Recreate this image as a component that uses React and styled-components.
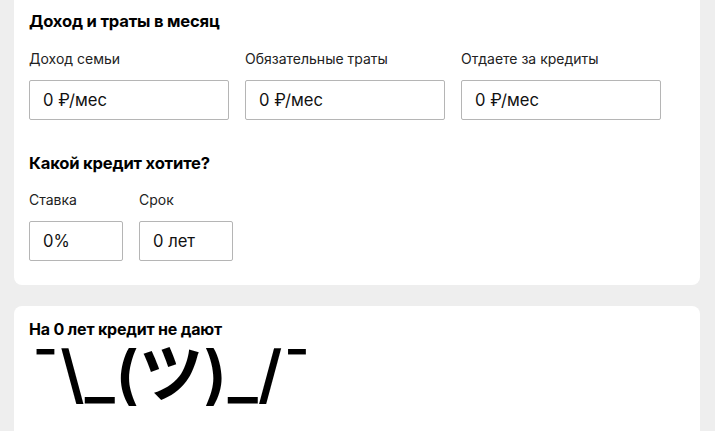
import React from 'react'
import styled, { createGlobalStyle } from 'styled-components'

const GlobalStyle = createGlobalStyle`
  body {
    margin: 0;
    background: #eeeeee;
    font-family: Inter, 'Noto Sans', sans-serif;
    color: #000;
  }
`

const Page = styled.div`
  padding: 0 15px 0 14px;
  margin-top: -8px;
  display: flex;
  flex-direction: column;
  gap: 21px;
`

const Card = styled.section`
  background: #fff;
  border-radius: 8px;
  padding: ${p => p.padding};
`

const Title = styled.h2`
  margin: 0;
  margin-top: ${p => p.top || '0'};
  font-size: ${p => p.size || '16.6px'};
  line-height: 22px;
  font-weight: 700;
  letter-spacing: -0.2px;
`

const Row = styled.div`
  display: flex;
  gap: 16px;
  margin-top: ${p => p.top};
`

const Field = styled.label`
  display: flex;
  flex-direction: column;
  gap: 12px;
`

const Label = styled.span`
  font-size: 14px;
  line-height: 18px;
  color: #222;
`

const Input = styled.input`
  box-sizing: border-box;
  width: ${p => p.width}px;
  height: 40px;
  border: 1px solid #b5b5b5;
  border-radius: 2px;
  padding: 0 13px;
  font-family: inherit;
  font-size: 16.6px;
  color: #111;
  background: #fff;
  outline: none;
`

const Shrug = styled.div`
  font-family: Inter, 'Noto Sans CJK JP', sans-serif;
  font-weight: 600;
  font-size: 64px;
  line-height: 58px;
  margin-top: 5px;
  padding-left: 2px;
  letter-spacing: 0.3px;
`

export default function App() {
  return (
    <>
      <GlobalStyle />
      <Page>
        <Card padding='18px 15px 24px'>
          <Title>Доход и траты в месяц</Title>
          <Row top='18px'>
            <Field>
              <Label>Доход семьи</Label>
              <Input width={200} defaultValue='0 ₽/мес' />
            </Field>
            <Field>
              <Label>Обязательные траты</Label>
              <Input width={200} defaultValue='0 ₽/мес' />
            </Field>
            <Field>
              <Label>Отдаете за кредиты</Label>
              <Input width={200} defaultValue='0 ₽/мес' />
            </Field>
          </Row>
          <Title top='32px'>Какой кредит хотите?</Title>
          <Row top='17px'>
            <Field>
              <Label>Ставка</Label>
              <Input width={94} defaultValue='0%' />
            </Field>
            <Field>
              <Label>Срок</Label>
              <Input width={94} defaultValue='0 лет' />
            </Field>
          </Row>
        </Card>
        <Card padding='12px 15px 40px'>
          <Title size='16px'>На 0 лет кредит не дают</Title>
          <Shrug>¯\_(ツ)_/¯</Shrug>
        </Card>
      </Page>
    </>
  )
}
